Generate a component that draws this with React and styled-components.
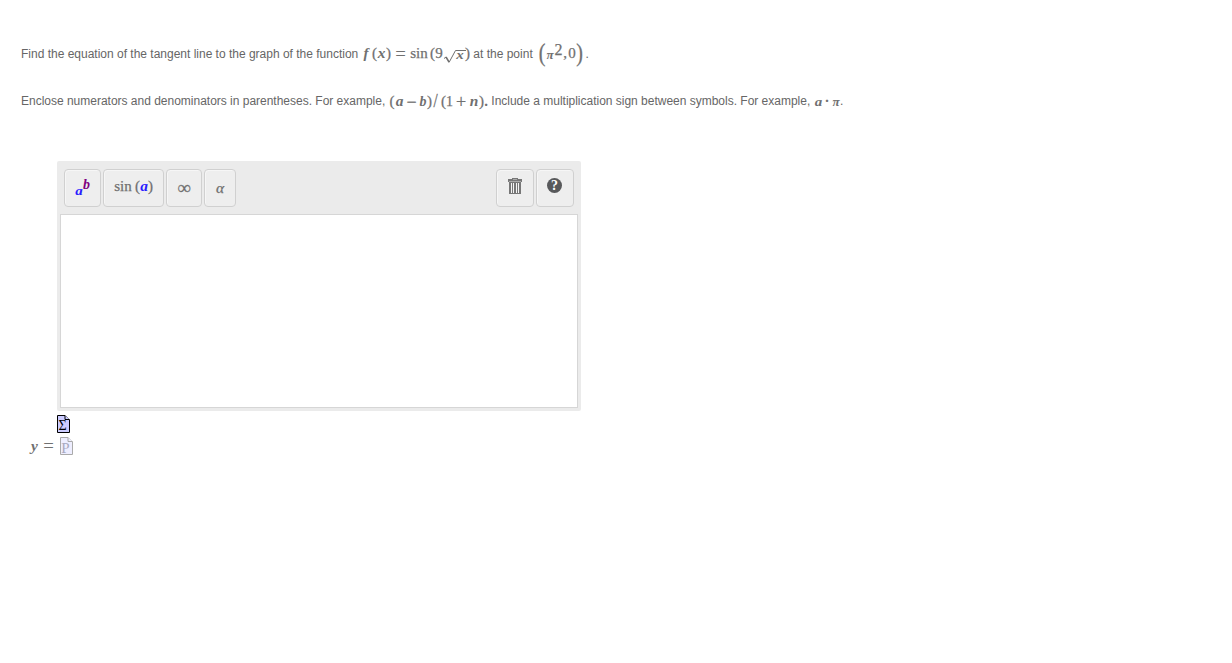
import React from 'react';
import styled, { createGlobalStyle } from 'styled-components'

const GlobalStyle = createGlobalStyle`
    * {
        box-sizing: border-box;
    }
    body {
        margin: 0;
        background: #fff;
        color: #666;
        font-family: "Liberation Sans", Arial, sans-serif;
        font-size: 12px;
    }
`

const Page = styled.main`
    padding: 37px 0 0 21px;
`

/* TEXT AND FORMULAS */
const Line = styled.div`
    display: flex;
    align-items: baseline;
    height: ${props => props.$height}px;
    line-height: 28px;
    white-space: pre;
`
const Words = styled.span`
    width: ${props => props.$w}px;
    letter-spacing: ${props => props.$spacing || 0}px;
`
const Sym = styled.span`
    display: inline-flex;
    justify-content: center;
    width: ${props => props.$w}px;
    margin-left: ${props => props.$gap || 0}px;
    color: ${props => props.$color || '#707070'};
    font-family: "Liberation Serif", "Times New Roman", serif;
    font-size: ${props => props.$size || 15}px;
    font-style: ${props => props.$italic ? 'italic' : 'normal'};
    font-weight: ${props => props.$bold ? 'bold' : 'normal'};
    -webkit-text-stroke: ${props => props.$bold ? 0 : 0.25}px;
    transform: translateY(${props => props.$shift || 0}px) scale(${props => props.$wide || 1}, ${props => props.$tall || 1});
`
const Formula = styled.span`
    display: inline-flex;
    align-items: baseline;
    transform: translateY(1px);
`
const Root = styled.svg`
    align-self: flex-start;
    width: 23px;
    height: 17px;
    margin: 10px -12px 0 1px;
    fill: none;
    stroke: #707070;
`

/* EDITOR */
const Editor = styled.section`
    width: 524px;
    height: 250px;
    margin: 48px 0 0 36px;
    padding: 8px 3px 3px;
    background: #ebebeb;
    border-radius: 2px;
`
const Toolbar = styled.div`
    display: flex;
    gap: 2px;
    height: 45px;
    padding: 0 4px;
`
const Tool = styled.button`
    display: flex;
    align-items: baseline;
    justify-content: center;
    width: ${props => props.$w}px;
    height: 38px;
    padding: 0;
    line-height: 33px;
    background: #eee;
    border: 1px solid #d0d0d0;
    border-radius: 4px;
    box-shadow: inset 1px 1px 0 #f6f6f6;
`
const IconTool = styled(Tool)`
    align-items: flex-start;
    padding-top: 8px;
    line-height: 1;
`
const Spacer = styled.div`
    flex: 1;
`
const Field = styled.div`
    height: 194px;
    background: #fff;
    border: 1px solid #d6d6d6;
`
const Help = styled.span`
    display: block;
    width: 15px;
    height: 15px;
    margin-right: 1px;
    border-radius: 50%;
    background: #58595b;
    color: #fff;
    font: bold 14px/15px "Liberation Serif", serif;
    text-align: center;
`

/* ANSWER */
const Preview = styled.div`
    display: flex;
    height: 22px;
    padding: 4px 0 0 36px;
`
const Answer = styled.div`
    display: flex;
    align-items: baseline;
    height: 28px;
    padding-left: 9px;
    line-height: 25px;
`
const Sheet = styled.span`
    position: relative;
    width: 13px;
    height: 18px;
    margin-left: ${props => props.$gap || 0}px;
    align-self: flex-start;
    margin-top: ${props => props.$top || 0}px;
    svg {
        display: block;
    }
`
const Letter = styled.span`
    position: absolute;
    left: 0;
    width: 11px;
    top: 3px;
    color: ${props => props.$color};
    font: ${props => props.$size}px/16px "Liberation Serif", serif;
    text-align: center;
`

function Trash(){
    return (
        <svg width="14" height="17" viewBox="0 0 14 17" shapeRendering="crispEdges">
            <path fill="#777" d="M4 0h6v1h4v3H0V1h4zM1 4h12v12H1z"/>
            <path fill="#aaa" d="M5 1h4v1H5zM1 3h12v1H1z"/>
            <path fill="#f4f4f4" d="M3 5h1v10H3zM5 5h1v10H5zM8 5h1v10H8zM10 5h1v10h-1z"/>
        </svg>
    )
}

function Paper({line, fill, letter, letterColor, letterSize, gap, top}){
    return (
        <Sheet $gap={gap} $top={top}>
            <svg width="13" height="18" viewBox="0 0 13 18">
                <path d="M.5.5H8L12.5 5V17.5H.5Z" fill={fill} stroke={line}/>
                <path d="M8 .5V4.5H12.5" fill={fill} stroke={line}/>
            </svg>
            <Letter $color={letterColor} $size={letterSize}>{letter}</Letter>
        </Sheet>
    )
}

function Question(){
    return (
        <Line $height={48}>
            <Words $w={341} $spacing={-0.005}>Find the equation of the tangent line to the graph of the function </Words>
            <Sym $w={8} $italic $bold>f</Sym>
            <Sym $w={5} $gap={2}>(</Sym>
            <Sym $w={9} $size={14} $wide={1.1} $italic $bold>x</Sym>
            <Sym $w={5}>)</Sym>
            <Sym $w={11} $gap={4} $size={18} $shift={2}>=</Sym>
            <Sym $w={18} $gap={4}>sin</Sym>
            <Sym $w={5} $gap={2}>(</Sym>
            <Sym $w={8}>9</Sym>
            <Root viewBox="0 0 23 17">
                <path d="M0 11.5l2-1.5" />
                <path d="M2 10l3 5" strokeWidth="1.5"/>
                <path d="M5 15.5L11.5 3.5H22"/>
            </Root>
            <Sym $w={10} $size={13} $wide={1.15} $shift={1} $italic $bold>x</Sym>
            <Sym $w={5}>)</Sym>
            <Words $w={68}> at the point</Words>
            <Sym $w={8} $size={20} $tall={1.3} $shift={1}>(</Sym>
            <Sym $w={8} $size={13} $shift={1} $italic $bold>π</Sym>
            <Sym $w={9} $size={16} $shift={-3}>2</Sym>
            <Sym $w={4}>,</Sym>
            <Sym $w={8} $gap={1}>0</Sym>
            <Sym $w={7} $size={20} $tall={1.3} $shift={1}>)</Sym>
            <Words $w={4} $spacing={-0.8}> .</Words>
        </Line>
    )
}

function Hint(){
    return (
        <Line $height={28}>
            <Words $w={368} $spacing={-0.01}>Enclose numerators and denominators in parentheses. For example,</Words>
            <Formula>
                <Sym $w={6}>(</Sym>
                <Sym $w={9} $size={14} $wide={1.1} $italic $bold>a</Sym>
                <Sym $w={11} $gap={2} $size={18} $shift={2}>−</Sym>
                <Sym $w={8} $gap={2} $size={14} $italic $bold>b</Sym>
                <Sym $w={5}>)</Sym>
                <Sym $w={7} $tall={1.2}>/</Sym>
                <Sym $w={5} $gap={2}>(</Sym>
                <Sym $w={7} $size={14}>1</Sym>
                <Sym $w={12} $gap={2} $size={18} $shift={2}>+</Sym>
                <Sym $w={10} $gap={2} $size={14} $wide={1.1} $italic $bold>n</Sym>
                <Sym $w={5}>)</Sym>
                <Sym $w={4} $bold>.</Sym>
            </Formula>
            <Words $w={326} $spacing={-0.01}> Include a multiplication sign between symbols. For example,</Words>
            <Formula>
                <Sym $w={9} $size={13} $wide={1.15} $italic $bold>a</Sym>
                <Sym $w={4} $gap={2} $bold>·</Sym>
                <Sym $w={8} $gap={3} $size={13} $italic $bold>π</Sym>
            </Formula>
            <Words $w={4}>.</Words>
        </Line>
    )
}

export default function App(){
    return (
        <>
            <GlobalStyle/>
            <Page>
                <Question/>
                <Hint/>
                <Editor>
                    <Toolbar>
                        <Tool $w={37}>
                            <Sym $w={8} $size={13} $wide={1.15} $italic $bold $color="#2a1cff" $shift={4}>a</Sym>
                            <Sym $w={7} $size={14} $italic $bold $color="#800080" $shift={-2}>b</Sym>
                        </Tool>
                        <Tool $w={61}>
                            <Sym $w={18}>sin</Sym>
                            <Sym $w={5} $gap={3}>(</Sym>
                            <Sym $w={8} $size={14} $wide={1.1} $italic $bold $color="#2a1cff">a</Sym>
                            <Sym $w={5}>)</Sym>
                        </Tool>
                        <Tool $w={36}><Sym $w={14} $size={19} $shift={1}>∞</Sym></Tool>
                        <Tool $w={32}><Sym $w={10} $size={14} $wide={1.1} $italic $shift={2}>α</Sym></Tool>
                        <Spacer/>
                        <IconTool $w={38}><Trash/></IconTool>
                        <IconTool $w={38}><Help>?</Help></IconTool>
                    </Toolbar>
                    <Field/>
                </Editor>
                <Preview>
                    <Paper line="#000" fill="#ccf" letter="Σ" letterColor="#000" letterSize={14}/>
                </Preview>
                <Answer>
                    <Sym $w={9} $size={14} $wide={1.1} $italic $bold>y</Sym>
                    <Sym $w={11} $gap={4} $size={18} $shift={1}>=</Sym>
                    <Paper line="#aaa" fill="#eeeeff" letter="P" letterColor="#aaaac0" letterSize={15} gap={6} top={4}/>
                </Answer>
            </Page>
        </>
    );
};
